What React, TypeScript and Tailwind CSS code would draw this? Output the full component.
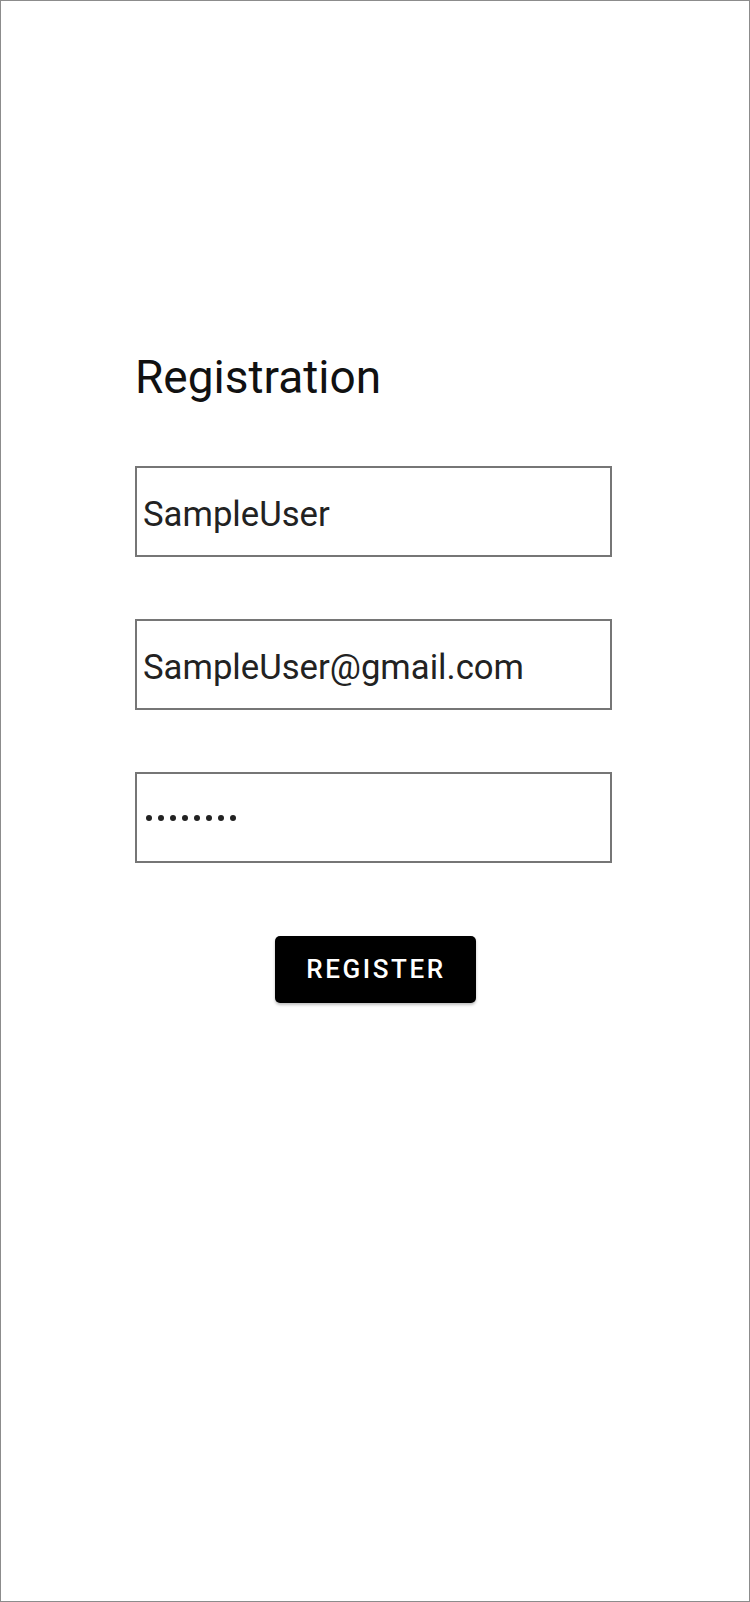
const FIELDS = [
  { id: 'username', value: 'SampleUser' },
  { id: 'email', value: 'SampleUser@gmail.com' },
];

function Field({ children }: { children: React.ReactNode }) {
  return (
    <div className="flex h-[91px] w-[477px] items-center border-2 border-[#767676] bg-white pl-[6px]">
      {children}
    </div>
  );
}

export default function App() {
  return (
    <div
      className="box-border flex h-[1602px] w-[750px] flex-col border border-[#8c8c8c] bg-white pt-[349px]"
      style={{ fontFamily: 'Roboto, "Noto Sans", sans-serif' }}
    >
      <div className="ml-[134px] flex flex-col">
        <h1 className="text-[46px] leading-[54px] font-normal text-[#111]">Registration</h1>

        <div className="mt-[62px] flex flex-col gap-[62px]">
          {FIELDS.map((f) => (
            <Field key={f.id}>
              <span className="mt-[4px] text-[34.7px] leading-[42px] text-[#222]">{f.value}</span>
            </Field>
          ))}
          <Field>
            <div className="ml-[3px] flex gap-[6px]">
              {Array.from({ length: 8 }).map((_, i) => (
                <span key={i} className="h-[6px] w-[6px] rounded-full bg-[#222]" />
              ))}
            </div>
          </Field>
        </div>
      </div>

      <div className="mt-[73px] flex justify-center">
        <button
          type="button"
          className="h-[67px] w-[201px] rounded-[5px] bg-black pl-[2px] text-[26px] font-medium tracking-[2.6px] text-white shadow-[0_2px_3px_rgba(0,0,0,0.25)]"
        >
          REGISTER
        </button>
      </div>
    </div>
  );
}
